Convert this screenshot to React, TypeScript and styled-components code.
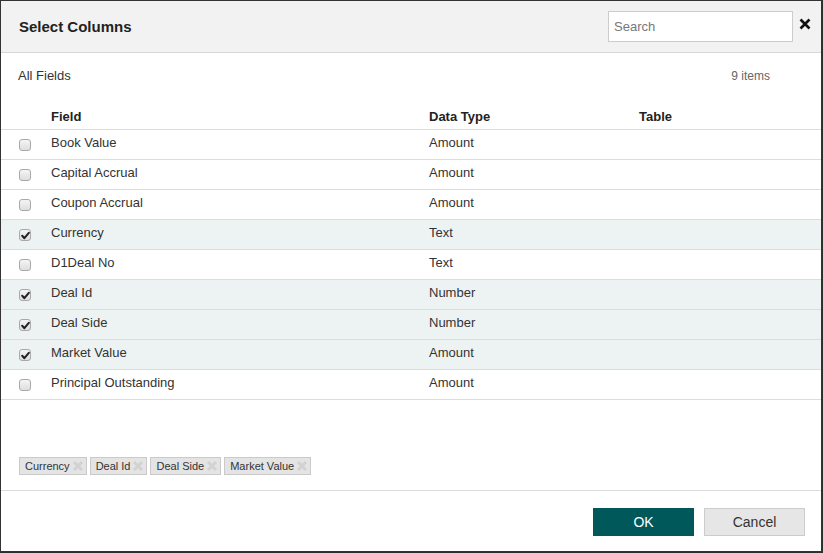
import React from "react";
import styled, { createGlobalStyle } from "styled-components";

const Global = createGlobalStyle`
  html, body { margin: 0; padding: 0; background: #2e2e2e; }
  body { font-family: "Liberation Sans", Arial, sans-serif; color: #333; }
  * { box-sizing: border-box; }
`;

const Dialog = styled.div`
  width: 822px;
  height: 552px;
  background: #fff;
  border: 1px solid #333;
  display: flex;
  flex-direction: column;
`;

const Header = styled.div`
  height: 52px;
  background: #f2f2f2;
  border-bottom: 1px solid #d6d6d6;
  display: flex;
  align-items: center;
  padding: 0 10px 0 18px;
  flex-shrink: 0;
`;

const Title = styled.div`
  font-size: 15px;
  font-weight: bold;
  color: #222;
  flex: 1;
`;

const SearchInput = styled.input`
  width: 185px;
  height: 31px;
  border: 1px solid #ccc;
  background: #fff;
  padding: 0 5px;
  font-family: inherit;
  font-size: 13px;
  color: #333;
  outline: none;
  margin-top: -1px;
  &::placeholder { color: #777; }
`;

const Close = styled.div`
  width: 18px;
  display: flex;
  justify-content: flex-end;
  margin-top: -6px;
`;

const InfoRow = styled.div`
  display: flex;
  justify-content: space-between;
  align-items: center;
  height: 45px;
  padding: 0 51px 0 17px;
  font-size: 13px;
  flex-shrink: 0;
`;

const Count = styled.span`
  color: #666;
  font-size: 12px;
`;

const Table = styled.div`
  display: flex;
  flex-direction: column;
`;

const Row = styled.div<{ $selected?: boolean; $head?: boolean }>`
  display: grid;
  grid-template-columns: 50px 378px 210px 1fr;
  align-items: center;
  height: ${(p) => (p.$head ? "32px" : "30px")};
  border-bottom: 1px solid #dcdcdc;
  background: ${(p) => (p.$selected ? "#edf3f3" : "#fff")};
  font-size: 13px;
  font-weight: ${(p) => (p.$head ? "bold" : "normal")};
  color: ${(p) => (p.$head ? "#222" : "#333")};
  padding-top: ${(p) => (p.$head ? "6px" : "0")};
  padding-bottom: ${(p) => (p.$head ? "0" : "5px")};
`;

const BoxCell = styled.div`
  padding-left: 18px;
  display: flex;
  align-items: center;
  padding-top: 6px;
`;

const Box = styled.span`
  width: 12px;
  height: 12px;
  border: 1px solid #a9a9a9;
  border-radius: 3px;
  background: linear-gradient(#f4f4f4, #dedede);
  display: flex;
  align-items: center;
  justify-content: center;
`;

const Spacer = styled.div`
  flex: 1;
  display: flex;
  align-items: flex-end;
  padding: 0 0 15px 18px;
  border-bottom: 1px solid #dcdcdc;
`;

const Tags = styled.div`
  display: flex;
  gap: 3px;
`;

const Tag = styled.div`
  height: 18px;
  background: #e4e4e4;
  border: 1px solid #cacaca;
  font-size: 11px;
  color: #333;
  display: flex;
  align-items: center;
  padding: 0 2px 0 5px;
  gap: 2px;
`;

const Footer = styled.div`
  height: 60px;
  display: flex;
  justify-content: flex-end;
  align-items: center;
  gap: 10px;
  padding: 2px 16px 0 0;
  flex-shrink: 0;
`;

const Button = styled.button<{ $primary?: boolean }>`
  width: 101px;
  height: 28px;
  font-family: inherit;
  font-size: 14px;
  border: 1px solid ${(p) => (p.$primary ? "#00585a" : "#cccccc")};
  background: ${(p) => (p.$primary ? "#00585a" : "#e6e6e6")};
  color: ${(p) => (p.$primary ? "#fff" : "#333")};
  cursor: pointer;
`;

const Check = () => (
  <svg width="9" height="9" viewBox="0 0 9 9">
    <path d="M1.2 4.8 L3.4 7.2 L7.8 1.8" stroke="#222" strokeWidth="2" fill="none" strokeLinecap="round" strokeLinejoin="round" />
  </svg>
);

const TagX = () => (
  <svg width="12" height="12" viewBox="0 0 12 12">
    <path d="M2 2 L10 10 M10 2 L2 10" stroke="#d2d2d2" strokeWidth="3" />
  </svg>
);

const rows: [string, string, boolean][] = [
  ["Book Value", "Amount", false],
  ["Capital Accrual", "Amount", false],
  ["Coupon Accrual", "Amount", false],
  ["Currency", "Text", true],
  ["D1Deal No", "Text", false],
  ["Deal Id", "Number", true],
  ["Deal Side", "Number", true],
  ["Market Value", "Amount", true],
  ["Principal Outstanding", "Amount", false],
];

export default function App() {
  return (
    <>
      <Global />
      <Dialog>
        <Header>
          <Title>Select Columns</Title>
          <SearchInput placeholder="Search" />
          <Close>
            <svg width="12" height="12" viewBox="0 0 12 12">
              <path d="M1.5 1.5 L10.5 10.5 M10.5 1.5 L1.5 10.5" stroke="#111" strokeWidth="2.6" />
            </svg>
          </Close>
        </Header>
        <InfoRow>
          <span>All Fields</span>
          <Count>9 items</Count>
        </InfoRow>
        <Table>
          <Row $head>
            <div />
            <div>Field</div>
            <div>Data Type</div>
            <div>Table</div>
          </Row>
          {rows.map(([name, type, sel]) => (
            <Row key={name} $selected={sel}>
              <BoxCell>
                <Box>{sel && <Check />}</Box>
              </BoxCell>
              <div>{name}</div>
              <div>{type}</div>
              <div />
            </Row>
          ))}
        </Table>
        <Spacer>
          <Tags>
            {rows.filter((r) => r[2]).map(([name]) => (
              <Tag key={name}>
                {name}
                <TagX />
              </Tag>
            ))}
          </Tags>
        </Spacer>
        <Footer>
          <Button $primary>OK</Button>
          <Button>Cancel</Button>
        </Footer>
      </Dialog>
    </>
  );
}
